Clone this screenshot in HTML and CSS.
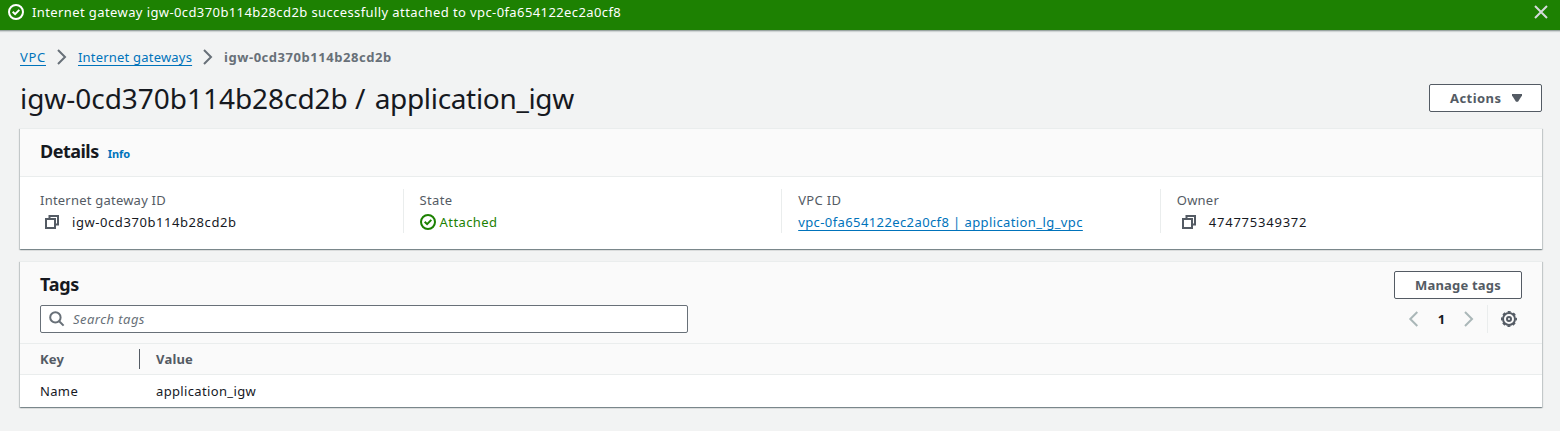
FILE: index.html
```html
<!DOCTYPE html>
<html lang="en">
<head>
<meta charset="utf-8">
<title>Internet gateway</title>
<link rel="stylesheet" href="styles.css">
</head>
<body>
<div class="flash">
  <svg class="icon" viewBox="0 0 16 16"><circle cx="8" cy="8" r="7"/><path d="M4.7 7.8l2.4 2.4 4.2-4.3"/></svg>
  <span class="flash-text">Internet gateway igw-0cd370b114b28cd2b successfully attached to vpc-0fa654122ec2a0cf8</span>
  <svg class="icon close" viewBox="0 0 16 16"><path d="M2 2l12 12M14 2L2 14"/></svg>
</div>
<main class="page">
  <nav class="crumbs">
    <a class="c-vpc">VPC</a>
    <svg class="icon" viewBox="0 0 16 16"><path d="M4 1l7 7-7 7"/></svg>
    <a class="c-igw">Internet gateways</a>
    <svg class="icon" viewBox="0 0 16 16"><path d="M4 1l7 7-7 7"/></svg>
    <b class="c-id">igw-0cd370b114b28cd2b</b>
  </nav>
  <header class="title-row">
    <h1>igw-0cd370b114b28cd2b <span class="slash">/</span> <span class="name">application_igw</span></h1>
    <button class="btn actions"><span>Actions</span><svg class="caret" viewBox="0 0 10 8"><path d="M0 0h10v1.5L6 7.8H4L0 1.5z"/></svg></button>
  </header>
  <section class="card details">
    <div class="card-head"><h2 class="h-details">Details</h2><a class="info">Info</a></div>
    <div class="fields">
      <div class="field"><div class="label l-igw">Internet gateway ID</div>
        <div class="value"><svg class="icon copy" viewBox="0 0 16 16"><path d="M2 5h9v9H2zM5.5 5V2H14v8.5h-3"/></svg><span class="v-igw">igw-0cd370b114b28cd2b</span></div></div>
      <div class="field"><div class="label l-state">State</div>
        <div class="value ok"><svg class="icon" viewBox="0 0 16 16"><circle cx="8" cy="8" r="7"/><path d="M4.7 7.8l2.4 2.4 4.2-4.3"/></svg><span class="v-state">Attached</span></div></div>
      <div class="field"><div class="label l-vpc">VPC ID</div>
        <div class="value"><a class="v-vpc">vpc-0fa654122ec2a0cf8 | application_lg_vpc</a></div></div>
      <div class="field"><div class="label l-owner">Owner</div>
        <div class="value"><svg class="icon copy" viewBox="0 0 16 16"><path d="M2 5h9v9H2zM5.5 5V2H14v8.5h-3"/></svg><span class="v-owner">474775349372</span></div></div>
    </div>
  </section>
  <section class="card tags">
    <div class="tags-head">
      <div class="tags-top"><h2 class="h-tags">Tags</h2><button class="btn manage"><span>Manage tags</span></button></div>
      <div class="tools">
        <div class="search"><svg class="icon" viewBox="0 0 16 16"><circle cx="6.4" cy="6.4" r="5.2"/><path d="M10.2 10.2l4.4 4.4"/></svg><span class="ph">Search tags</span></div>
        <div class="pager">
          <svg class="icon" viewBox="0 0 16 16"><path d="M11.3 1l-7 7 7 7"/></svg>
          <b>1</b>
          <svg class="icon" viewBox="0 0 16 16"><path d="M4 1l7 7-7 7"/></svg>
          <span class="sep"></span>
          <svg class="icon gear" viewBox="0 0 16 16"><circle cx="8" cy="8" r="6"/><circle class="teeth" cx="8" cy="8" r="7.2"/><circle cx="8" cy="8" r="2"/></svg>
        </div>
      </div>
    </div>
    <div class="tr th"><div class="key">Key</div><div class="val">Value</div></div>
    <div class="tr"><div class="key">Name</div><div class="val">application_igw</div></div>
  </section>
</main>
</body>
</html>
```
FILE: styles.css
```css
* { box-sizing: border-box; }
body { margin: 0; height: 431px; overflow: hidden; background: #f2f3f3; color: #16191f; font: 13px/22px "Noto Sans", sans-serif; white-space: nowrap; }
h1, h2 { margin: 0; }
a { color: #0073bb; text-decoration: underline; text-underline-offset: 3px; text-decoration-skip-ink: none; }
.icon { width: 16px; height: 16px; fill: none; stroke: currentColor; stroke-width: 2; flex: none; }
.flash { display: flex; height: 31px; padding: 4px 11px 0 8px; background: #1d8102; border-bottom: 1px solid #9ba5a2; color: #fff; line-height: 17px; box-shadow: 0 1px 1px #d0d4d4; }
.flash-text { margin-left: 8px; letter-spacing: .4px; }
.close { margin-left: auto; color: #d5dbdb; }
.page { padding: 0 18px 0 20px; }
.crumbs { display: flex; align-items: center; height: 22px; margin-top: 15px; color: #687078; }
.crumbs .icon { margin: 0 8px; }
.c-vpc { letter-spacing: .7px; }
.c-igw { letter-spacing: .2px; }
.c-id { letter-spacing: .54px; }
.title-row { display: flex; justify-content: space-between; height: 60px; }
h1 { font-size: 28px; font-weight: 400; line-height: 36px; margin-top: 12px; letter-spacing: -.04px; }
.slash { letter-spacing: 2px; }
.name { letter-spacing: -.33px; }
.btn { height: 28px; background: #fff; border: 1px solid #545b64; border-radius: 2px; color: #545b64; font: 700 13px/22px "Noto Sans", sans-serif; display: flex; align-items: center; padding: 0 19px 0 20px; }
.actions { width: 113px; margin-top: 16px; justify-content: space-between; letter-spacing: .45px; }
.caret { width: 10px; height: 8px; fill: currentColor; }
.card { background: #fff; box-shadow: 0 1px 1px 0 rgba(0,28,36,.3), 1px 1px 1px 0 rgba(0,28,36,.15), -1px 1px 1px 0 rgba(0,28,36,.15); border-top: 1px solid #eaeded; }
.details { height: 121px; }
.card-head { height: 48px; display: flex; align-items: baseline; padding: 10px 20px 0; background: #fafafa; border-bottom: 1px solid #eaeded; }
h2 { font-size: 18px; line-height: 24px; }
.h-details { letter-spacing: -.52px; }
.info { margin-left: 9px; font-size: 11px; font-weight: 700; text-decoration: none; }
.fields { display: grid; grid-template-columns: repeat(4, 378.6px); padding: 12px 4px 0; }
.field { height: 44px; padding-left: 16px; border-left: 1px solid #eaeded; }
.field:first-child { border-color: transparent; padding-left: 15px; }
.label { color: #545b64; letter-spacing: .22px; }
.l-state, .l-vpc { letter-spacing: .35px; }
.value { display: flex; align-items: center; height: 22px; letter-spacing: .4px; }
.v-igw { letter-spacing: .57px; }
.v-owner { letter-spacing: .77px; }
.copy { color: #545b64; margin: 0 12px 0 4px; }
.ok { color: #1d8102; }
.ok span { margin-left: 4px; }
.tags { height: 146px; margin-top: 12px; }
.tags-head { height: 82px; padding: 9px 20px 0; background: #fafafa; border-bottom: 1px solid #eaeded; }
.tags-top { display: flex; justify-content: space-between; height: 34px; }
.h-tags { margin-top: 1px; letter-spacing: -.25px; }
.manage { width: 128px; justify-content: center; padding: 0; letter-spacing: .2px; }
.tools { display: flex; justify-content: space-between; }
.search { width: 648px; height: 28px; display: flex; align-items: center; background: #fff; border: 1px solid #687078; border-radius: 2px; padding: 0 8px; color: #687078; }
.ph { margin-left: 8px; font-style: italic; letter-spacing: .45px; }
.pager { display: flex; align-items: center; color: #aab7b8; padding-right: 5px; height: 28px; }
.pager b { color: #16191f; width: 39px; text-align: center; }
.sep { width: 1px; height: 28px; background: #eaeded; margin: 0 13px 0 10px; }
.gear { color: #545b64; stroke-width: 2; }
.teeth { stroke-width: 1.6; stroke-dasharray: 3 2.655; stroke-dashoffset: 1.5; }
.tr { display: flex; height: 32px; align-items: center; letter-spacing: .35px; }
.th { height: 31px; background: #fafafa; border-bottom: 1px solid #eaeded; color: #545b64; font-weight: 700; letter-spacing: .2px; }
.key { width: 120px; padding-left: 20px; line-height: 20px; }
.th .key { border-right: 1px solid #545b64; }
.val { padding-left: 16px; }
```
